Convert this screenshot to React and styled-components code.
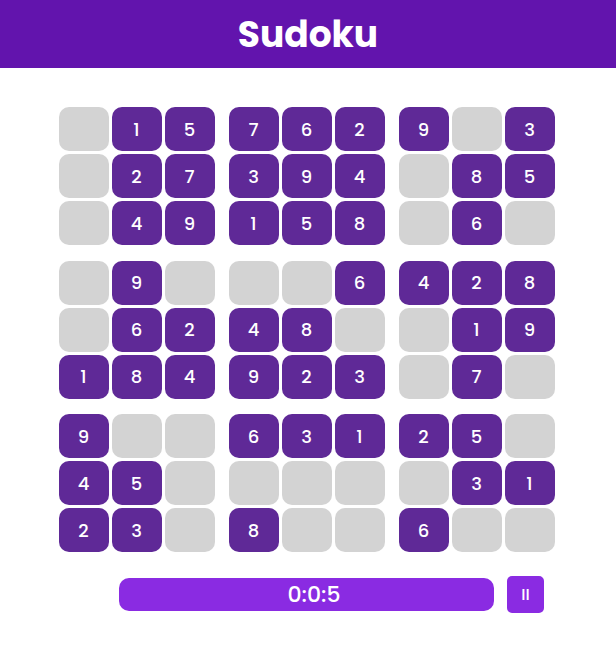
import React, { useState } from 'react';
import styled, { createGlobalStyle } from 'styled-components';

const GlobalStyle = createGlobalStyle`
    body {
        margin: 0;
        background: #ffffff;
        font-family: "Poppins", "Inter", "Noto Sans", sans-serif;
    }
`;

const Header = styled.header`
    height: 68px;
    background: #6214ad;
    display: flex;
    align-items: center;
    justify-content: center;
`;

const Title = styled.h1`
    margin: 0;
    color: #ffffff;
    font-size: 36px;
    font-weight: 700;
`;

const Board = styled.div`
    display: grid;
    grid-template-columns: repeat(3, auto);
    justify-content: center;
    column-gap: 14px;
    row-gap: 15.5px;
    margin: 39px auto 0;
    padding-right: 3px;
`;

const Block = styled.div`
    display: grid;
    grid-template-columns: repeat(3, 50px);
    grid-auto-rows: 44px;
    column-gap: 3px;
    row-gap: 3px;
`;

const Cell = styled.div`
    border-radius: 10px;
    background: ${(p) => (p.$filled ? '#5f2997' : '#d3d3d3')};
    color: #ffffff;
    display: flex;
    align-items: center;
    justify-content: center;
    font-size: 18px;
    font-weight: 500;
`;

const TimerRow = styled.div`
    display: grid;
    grid-template-columns: 1fr 375px 1fr;
    align-items: center;
    column-gap: 13px;
    margin-top: 24px;
    padding-right: 3px;
`;

const TimerBar = styled.div`
    grid-column: 2;
    height: 33px;
    box-sizing: border-box;
    padding-left: 15px;
    border-radius: 10px;
    background: #8a2be2;
    color: #ffffff;
    display: flex;
    align-items: center;
    justify-content: center;
    font-size: 22px;
    font-weight: 500;
`;

const PauseButton = styled.button`
    grid-column: 3;
    justify-self: start;
    width: 37px;
    height: 37px;
    border: none;
    border-radius: 5px;
    background: #8a2be2;
    color: #ffffff;
    font-family: inherit;
    font-size: 16px;
    font-weight: 500;
    padding: 0;
    cursor: pointer;
`;

// rows of the puzzle, 0 = empty
const grid = [
    [0, 1, 5, 7, 6, 2, 9, 0, 3],
    [0, 2, 7, 3, 9, 4, 0, 8, 5],
    [0, 4, 9, 1, 5, 8, 0, 6, 0],
    [0, 9, 0, 0, 0, 6, 4, 2, 8],
    [0, 6, 2, 4, 8, 0, 0, 1, 9],
    [1, 8, 4, 9, 2, 3, 0, 7, 0],
    [9, 0, 0, 6, 3, 1, 2, 5, 0],
    [4, 5, 0, 0, 0, 0, 0, 3, 1],
    [2, 3, 0, 8, 0, 0, 6, 0, 0],
];

function blockCells(b) {
    const br = Math.floor(b / 3) * 3;
    const bc = (b % 3) * 3;
    const cells = [];
    for (let r = 0; r < 3; r++) {
        for (let c = 0; c < 3; c++) {
            cells.push(grid[br + r][bc + c]);
        }
    }
    return cells;
}

function App() {
    const [paused, setPaused] = useState(false);

    return (
        <>
            <GlobalStyle />
            <Header>
                <Title>Sudoku</Title>
            </Header>
            <Board>
                {[0, 1, 2, 3, 4, 5, 6, 7, 8].map((b) => (
                    <Block key={b}>
                        {blockCells(b).map((v, i) => (
                            <Cell key={i} $filled={v !== 0}>{v !== 0 ? v : ''}</Cell>
                        ))}
                    </Block>
                ))}
            </Board>
            <TimerRow>
                <TimerBar>0:0:5</TimerBar>
                <PauseButton onClick={() => setPaused(!paused)}>{paused ? '▶' : 'II'}</PauseButton>
            </TimerRow>
        </>
    );
}

export default App;
